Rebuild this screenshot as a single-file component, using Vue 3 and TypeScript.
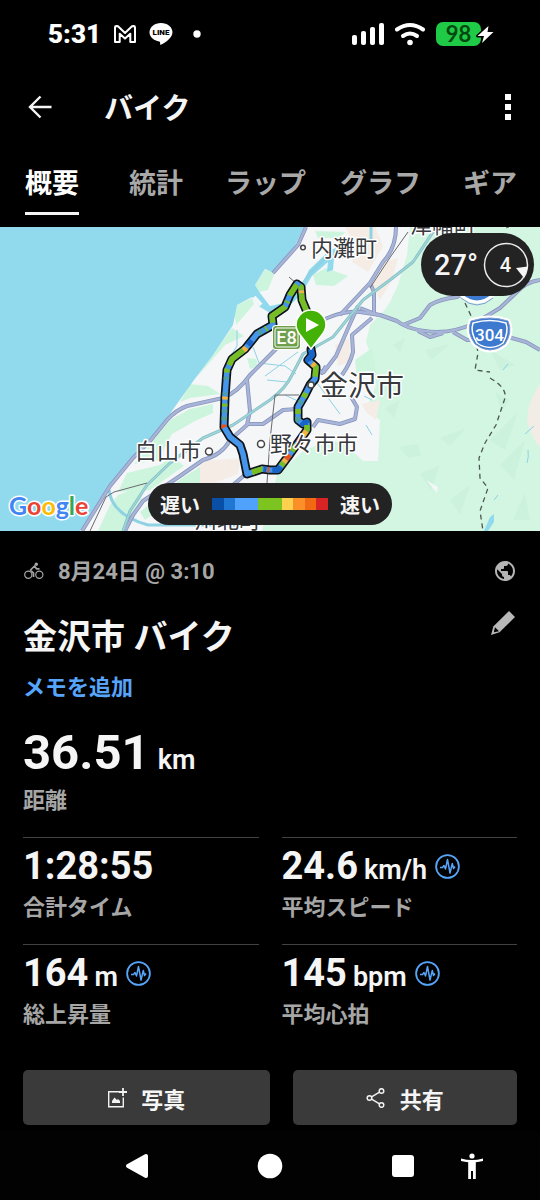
<script setup lang="ts">
import { ref } from 'vue'

interface Stat {
  value: string
  unit?: string
  label: string
  chart: boolean
}

interface RouteBand {
  color: string
  from: number
  to: number
}

const tabs = ['概要', '統計', 'ラップ', 'グラフ', 'ギア']
const activeTab = ref(0)

const stats: Stat[] = [
  { value: '1:28:55', label: '合計タイム', chart: false },
  { value: '24.6', unit: 'km/h', label: '平均スピード', chart: true },
  { value: '164', unit: 'm', label: '総上昇量', chart: true },
  { value: '145', unit: 'bpm', label: '平均心拍', chart: true },
]

const speedScale = [
  '#0a4fa6', '#2077d3', '#4fa1fb', '#4fa1fb', '#7cc41f',
  '#7cc41f', '#fdd04d', '#fb9029', '#ef6a12', '#d82424',
]

const roads = [
  'M306 227L298 245L273 273',
  'M82 531L110 486L133 458L150 441L167 420Q176 410 187 406L223 398Q238 392 250 375L275 350L297 330L330 317Q345 311 360 312L380 315L397 321Q410 331 437 332Q457 332 477 322L500 308L517 292Q526 282 540 280',
  'M396 227Q396 248 383 262L370 283L340 315',
  'M370 283L374 292V314',
  'M360 308L378 315',
  'M372 318L352 335L353 352Q350 364 342 375',
  'M358 306L349 326L336 356L323 373',
  'M403 325L420 318L430 305Q440 299 457 297L480 285',
  'M418 331L430 337L443 333',
  'M453 332L467 340L490 340',
  'M508 337L526 342L540 350',
  'M247 380L250 411L247 425L230 440Q222 455 203 460L180 476L143 501L133 515L125 531',
  'M247 424L263 424L283 410L297 409',
  'M313 427L318 420L340 424L355 419L357 407L350 395',
  'M247 473L233 485',
  'M316 367L322 373L326 366',
]

const trail =
  'M311 349L312 355L308 360L316 367L315 379L310 385L305 395L298 407V420L303 424L307 422V430L290 454L278 470H270L262 469L247 474L243 454L240 445L230 437L224 427L225 397L227 370L232 359L245 349L257 334L273 325L272 316L285 307L290 295L297 284L301 287L302 300L307 312'

const dark = '#1763c6'
const green = '#78bd22'
const teal = '#4f9f9a'
const amber = '#f2b43c'
const red = '#e6501d'

const bands: RouteBand[] = [
  { color: dark, from: 0, to: 14 },
  { color: amber, from: 18, to: 22 },
  { color: green, from: 22, to: 33 },
  { color: green, from: 52, to: 57 },
  { color: teal, from: 61, to: 64 },
  { color: green, from: 70, to: 75 },
  { color: teal, from: 78, to: 82 },
  { color: dark, from: 85, to: 93 },
  { color: green, from: 95, to: 101 },
  { color: amber, from: 101, to: 107 },
  { color: red, from: 109, to: 115 },
  { color: green, from: 118, to: 126 },
  { color: red, from: 130, to: 136 },
  { color: amber, from: 136, to: 140 },
  { color: green, from: 140, to: 144 },
  { color: dark, from: 145, to: 155 },
  { color: red, from: 158, to: 160 },
  { color: dark, from: 161, to: 164 },
  { color: green, from: 165, to: 176 },
  { color: red, from: 235, to: 238 },
  { color: teal, from: 242, to: 246 },
  { color: teal, from: 250, to: 253 },
  { color: green, from: 256, to: 259 },
  { color: amber, from: 263, to: 266 },
  { color: teal, from: 268, to: 270 },
  { color: teal, from: 283, to: 286 },
  { color: green, from: 290, to: 294 },
  { color: green, from: 298, to: 319 },
  { color: amber, from: 319, to: 323 },
  { color: dark, from: 326, to: 332 },
  { color: teal, from: 342, to: 346 },
  { color: green, from: 350, to: 352 },
  { color: green, from: 361, to: 384 },
  { color: green, from: 388, to: 390 },
  { color: green, from: 396, to: 409 },
  { color: green, from: 413, to: 418 },
  { color: amber, from: 418, to: 421 },
  { color: green, from: 421, to: 440 },
]
</script>

<template>
  <div class="screen">
    <div class="status">
      <div class="status-side">
        <span class="clock">5:31</span>
        <svg class="gmail" width="24" height="20" viewBox="0 0 24 20">
          <path d="M2 18V3.4Q2 2 3.4 2L5 2.3L12 9L19 2.3L20.6 2Q22 2 22 3.4V18H17.3V9.7L12 14.6L6.700 9.7V18Z" fill="none" stroke="#fff" stroke-width="2" stroke-linejoin="round" />
        </svg>
        <svg class="line-app" width="24" height="24" viewBox="0 0 24 24">
          <path d="M12 1C5.600 1 .5 5.200 .5 10.300C.5 15 4.700 18.700 10.300 19.400C11.800 19.800 10.800 22 11.200 22.800C12 23.400 23.500 17.200 23.500 10.300C23.500 5.200 18.400 1 12 1Z" fill="#fff" />
          <text x="12" y="13" text-anchor="middle" class="line-text">LINE</text>
        </svg>
        <svg class="more-dot" width="8" height="8" viewBox="0 0 8 8"><circle cx="4" cy="4" r="3.700" fill="#fff" /></svg>
      </div>
      <div class="status-side">
        <svg width="32" height="24" viewBox="0 0 32 24" fill="#fff">
          <rect x="0" y="13" width="5" height="10" rx="2" />
          <rect x="9" y="9" width="5" height="14" rx="2" />
          <rect x="18" y="5" width="5" height="18" rx="2" />
          <rect x="27" y="1" width="5" height="22" rx="2" />
        </svg>
        <svg class="wifi" width="32" height="24" viewBox="0 0 32 24" fill="none" stroke="#fff" stroke-linecap="round">
          <path d="M3 7.500Q16-1.500 29 7.500" stroke-width="4" />
          <path d="M9 14Q16 9 23 14" stroke-width="4" />
          <circle cx="16" cy="20.500" r="2.800" fill="#fff" stroke="none" />
        </svg>
        <svg class="battery" width="60" height="26" viewBox="0 0 60 26">
          <rect x="0" y="1" width="45" height="24" rx="7" fill="#1fcb46" />
          <text x="22.500" y="20.500" text-anchor="middle" class="battery-text">98</text>
          <path d="M52.500 5L41.500 15H48L46 22L57.500 11H51.500Z" fill="#fff" stroke="#000" stroke-width="3" paint-order="stroke" stroke-linejoin="round" />
        </svg>
      </div>
    </div>

    <header class="app-bar">
      <button class="icon-btn" type="button" aria-label="戻る">
        <svg width="24" height="24" viewBox="0 0 24 24" fill="none" stroke="#f5f5f5" stroke-width="2.400"><path d="M23.500 12H2M12.500 1.500L2 12L12.500 22.500" /></svg>
      </button>
      <h1>バイク</h1>
      <button class="icon-btn" type="button" aria-label="その他">
        <svg width="6" height="26" viewBox="0 0 6 26" fill="#fff"><path d="M0 0H6V6H0ZM0 10H6V16H0ZM0 20H6V26H0Z" /></svg>
      </button>
    </header>

    <nav class="tabs">
      <button
        v-for="(tab, i) in tabs"
        :key="tab"
        type="button"
        class="tab"
        :class="{ active: i === activeTab }"
        @click="activeTab = i"
      >
        <span>{{ tab }}</span>
      </button>
    </nav>

    <section class="map">
      <svg class="map-canvas" viewBox="0 227 540 304">
        <rect x="0" y="227" width="540" height="304" fill="#f5f6f8" />
        <path d="M410 227H540V531H262L277 475L303 451L330 440L345 444L363 461H378L380 420L366 410L376 385L372 358L366 342L370 325L383 312L390 302L398 285L407 255Z" fill="#d2f6e2" />
        <path d="M540 384Q528 400 527 420Q532 440 540 447Z" fill="#f2ece6" />
        <g fill="#f4ece5">
          <path d="M345 227H375L383 246L368 272L352 262L356 246Z" />
          <path d="M385 262L398 258L392 280L380 300L372 284Z" />
          <path d="M362 404L380 400L376 420L366 412Z" />
          <path d="M205 461L240 458L238 474L200 488L190 476Z" />
          <path d="M335 345L349 338L350 362L338 366Z" />
          <path d="M150 505L190 480L240 484V510L170 520Z" />
        </g>
        <g fill="#cdf5dd">
          <path d="M255 285L265 270L275 272L268 290L259 292Z" />
          <path d="M234 312L237 305L252 298L254 304L243 317L236 325Z" />
          <path d="M232 328L244 336L225 345L196 378Z" />
          <path d="M247 358L256 359L258 366L250 369Z" />
          <path d="M170 420L190 409L213 404V413L195 421L172 434L158 460L134 464Z" />
          <path d="M190 384L208 386L220 394L190 398L180 402Z" />
          <path d="M127 473L160 465L172 456L184 466L150 490L118 492Z" />
          <path d="M118 495L145 485L138 510L126 531H98L110 505Z" />
          <path d="M313 275L326 268L348 276L334 286L316 285Z" />
          <path d="M315 231L345 232L340 238H318Z" />
          <path d="M355 360L372 348L376 372L357 378Z" />
          <path d="M182 478L200 467L200 482L145 520L140 512Z" />
        </g>
        <path d="M0 227H304L294 248L272 272L265 269L255 285L260 293L270 306L284 303L300 288L309 270L330 250L345 245L334 258L333 270L327 272L328 262L312 276L300 296L282 312L270 313L260 307L252 297L237 305L233 325L213 355L194 380L167 418L150 439L133 456L110 484L80 531H0Z" fill="#91daee" />
        <path d="M254 297L261 305" stroke="#f5f6f8" stroke-width="4" />
        <g fill="#bfe8d3" opacity="0.300">
          <path d="M393 345L405 338L400 352Z" /><path d="M425 350L450 344L431 360Z" /><path d="M490 350L515 365L500 370Z" />
          <path d="M495 392L509 400L502 412Z" /><path d="M490 440L518 412L505 450Z" /><path d="M399 447L418 444L421 456L408 458Z" />
          <path d="M440 438L466 428L450 446Z" /><path d="M500 465L525 440L514 480Z" /><path d="M420 474L440 465L431 490Z" />
          <path d="M385 408L400 400L394 418Z" /><path d="M450 500L470 485L460 515Z" /><path d="M513 520L525 493L530 520Z" />
        </g>
        <path d="M426 480L438 487L437 493Z" fill="#f5f6f8" />
        <path d="M484 531L490 517L494 514V522L488 531Z" fill="#91daee" />
        <g fill="none" stroke="#8ed2e4">
          <path d="M109 490Q112 515 148 525H240" stroke-width="3" />
          <path d="M237 330V346L228 360M253 347L259 363L285 366L296 374M267 380L287 382M285 395L300 402M315 380L340 414M265 376L298 352M366 425L372 435M372 400L364 396M525 434L534 426M527 463Q529 457 528 450M494 500L498 495M503 370L508 364" stroke-width="1" />
          <path d="M297 292L309 275L331 251M371 227V241" stroke-width="3" />
        </g>
        <g fill="none" stroke-linejoin="round">
          <path v-for="d in roads" :key="'edge' + d" :d="d" stroke="#8795bb" stroke-width="4" />
          <path v-for="d in roads" :key="d" :d="d" stroke="#a8b5d8" stroke-width="2.400" />
          <path d="M123 531L130 511L147 485L170 463L203 438L233 425L270 400Q286 388 292 375L303 354L333 337L363 300L390 280L413 262L433 232L437 227" stroke="#83bfc6" stroke-width="3" />
          <path d="M123 531L130 511L147 485L170 463L203 438L233 425L270 400Q286 388 292 375L303 354L333 337L363 300L390 280L413 262L433 232L437 227" stroke="#a2d6d8" stroke-width="1.400" />
          <path d="M408 232L391 256L370 288M90 531L106 497L114 492L147 483M275 395H299M275 395L270 440L267 483M289 277L297 284M506 228L509 227" stroke="#6a6a6e" stroke-width="1" />
          <path d="M465 303L473 320L478 353L475 370L490 372M490 378Q507 388 505 398L496 425L485 443L479 458L480 478L488 488L480 511L483 531" stroke="#4c5652" stroke-width="1.300" stroke-dasharray="5 4" />
        </g>
        <g fill="none" stroke-linejoin="round">
          <path :d="trail" stroke="#101418" stroke-width="9" stroke-linecap="round" />
          <path :d="trail" stroke="#4595ea" stroke-width="5.500" />
          <path
            v-for="band in bands"
            :key="band.from"
            :d="trail"
            :stroke="band.color"
            :stroke-dasharray="`0 ${band.from} ${band.to - band.from} 1000`"
            stroke-width="5.500"
          />
        </g>

        <rect x="272" y="325" width="29" height="25" rx="4" fill="#fff" />
        <rect x="273" y="326" width="27" height="23" rx="3" fill="#6f9f4d" />
        <rect x="275" y="328" width="23" height="19" rx="2" fill="none" stroke="#fff" />
        <text x="286.500" y="344" text-anchor="middle" class="badge-text">E8</text>

        <path d="M471 321Q490 315 508 321Q513 332 505 344Q490 356 475 344Q466 332 471 321Z" fill="#3d79cf" stroke="#fff" stroke-width="5" paint-order="stroke" />
        <path d="M471 321Q490 315 508 321Q513 332 505 344Q490 356 475 344Q466 332 471 321Z" fill="none" stroke="#7f9dd0" stroke-width="1" />
        <path d="M473 323Q490 318 506 323Q509 332 503 343Q490 352 477 343Q470 332 473 323Z" fill="#3d79cf" stroke="#fff" stroke-width="1.500" />
        <text x="489.500" y="341" text-anchor="middle" class="badge-text shield-text">304</text>
        <path d="M462 296Q477 308 492 296L488 280H466Z" fill="#3d79cf" stroke="#fff" stroke-width="3" />
        <path d="M461 298Q477 312 493 298" fill="none" stroke="#7f9dd0" stroke-width="1" />

        <g fill="#fff" stroke="#444" stroke-width="1.500">
          <circle cx="303" cy="247.500" r="2.300" />
          <circle cx="209" cy="451.500" r="3.500" />
          <circle cx="261" cy="444" r="3.500" />
          <circle cx="311" cy="385" r="3" />
        </g>
        <g class="place">
          <text x="311" y="256">内灘町</text>
          <text x="410" y="233">津幡町</text>
          <text x="135" y="459">白山市</text>
          <text x="270" y="452">野々市市</text>
          <text x="195" y="528">川北町</text>
          <text x="320" y="396" class="city">金沢市</text>
        </g>

        <path d="M311 349L301 336Q296 330 296 325A15 15 0 0 1 326 325Q326 330 321 336Z" fill="#43b105" stroke="#fff" stroke-width="1.500" />
        <path d="M306 318L319 325L306 332Z" fill="#fff" />
        <text x="9" y="515" class="google"><tspan fill="#4285f4">G</tspan><tspan fill="#ea4335">o</tspan><tspan fill="#fbbc05">o</tspan><tspan fill="#4285f4">g</tspan><tspan fill="#34a853">l</tspan><tspan fill="#ea4335">e</tspan></text>
      </svg>

      <div class="weather">
        <span>27°</span>
        <svg width="46" height="46" viewBox="0 0 46 46">
          <circle cx="23" cy="23" r="21.500" fill="none" stroke="#ececec" stroke-width="1.500" />
          <text x="22.500" y="30" text-anchor="middle" class="wind-text">4</text>
          <path d="M33 26L45 24.500L41 36Z" fill="#f5f5f5" />
        </svg>
      </div>

      <div class="legend">
        <span>遅い</span>
        <div class="scale">
          <i v-for="(color, i) in speedScale" :key="i" :style="{ background: color }"></i>
        </div>
        <span>速い</span>
      </div>
    </section>

    <main class="details">
      <div class="meta">
        <svg width="20" height="18" viewBox="0 0 20 18" fill="none" stroke="#a6a6a6" stroke-width="1.200" stroke-linejoin="round">
          <circle cx="4.300" cy="12.700" r="3.600" /><circle cx="15.300" cy="12.700" r="3.600" />
          <path d="M9.500 15V11L6.500 8L10.500 4L12.500 6.800H15.500" stroke-width="1.700" />
          <circle cx="12.300" cy="2.200" r="1.700" fill="#a6a6a6" stroke="none" />
        </svg>
        <span class="date">8月24日 @ 3:10</span>
        <svg width="20" height="20" viewBox="2 2 20 20" fill="#b4b4b4">
          <path d="M12 2C6.480 2 2 6.480 2 12s4.480 10 10 10 10-4.480 10-10S17.520 2 12 2zm-1 17.930c-3.950-.49-7-3.850-7-7.930 0-.62.080-1.210.210-1.790L9 15v1c0 1.100.9 2 2 2v1.930zm6.900-2.540c-.26-.81-1-1.390-1.900-1.390h-1v-3c0-.55-.45-1-1-1H8v-2h2c.55 0 1-.45 1-1V7h2c1.100 0 2-.9 2-2v-.41c2.930 1.190 5 4.060 5 7.410 0 2.080-.8 3.970-2.100 5.390z" />
        </svg>
      </div>

      <div class="title-row">
        <h2>金沢市 バイク</h2>
        <button class="edit" type="button" aria-label="編集">
          <svg width="24" height="24" viewBox="0 0 24 24">
            <path d="M18 0L24 6L8.500 21.300L0 24L2.500 15.200Z" fill="#b8b8b8" />
            <path d="M4 16.300L8 20.200L2.800 21.300Z" fill="#000" />
          </svg>
        </button>
      </div>
      <a class="memo" href="#">メモを追加</a>

      <div class="distance">
        <p class="figure"><strong>36.51</strong><span>km</span></p>
        <p class="label">距離</p>
      </div>

      <div class="stats">
        <div v-for="stat in stats" :key="stat.label" class="stat">
          <div class="stat-value">
            <p class="figure"><strong>{{ stat.value }}</strong><span v-if="stat.unit">{{ stat.unit }}</span></p>
            <button v-if="stat.chart" class="chart" type="button" aria-label="グラフを表示">
              <svg width="25" height="25" viewBox="0 0 25 25" fill="none" stroke="#56a5fb">
                <circle cx="12.500" cy="12.500" r="11.400" stroke-width="1.800" />
                <path d="M5 13.500H7.500L9 11.500L10.500 15L12.500 5.500L15 19L17.300 9.500L18.500 14.500L20 12.500" stroke-width="1.500" stroke-linejoin="round" />
              </svg>
            </button>
          </div>
          <p class="label">{{ stat.label }}</p>
        </div>
      </div>

      <div class="actions">
        <button type="button">
          <svg width="20" height="20" viewBox="0 0 20 20" fill="none" stroke="#f2f2f2">
            <path d="M12 3.700H1.700V18.800H16.300V9.500" stroke-width="1.400" />
            <path d="M16 0V8M12 4H20" stroke-width="1.800" />
            <path d="M5 15V13L7.500 9.500L10 12L11 11L13 13V15Z" fill="#f2f2f2" stroke="none" />
          </svg>
          写真
        </button>
        <button type="button">
          <svg width="20" height="20" viewBox="0 0 20 20" fill="none" stroke="#f2f2f2" stroke-width="1.500">
            <circle cx="3.500" cy="10" r="2.300" /><circle cx="15.500" cy="3" r="2.300" /><circle cx="15.500" cy="17" r="2.300" />
            <path d="M5.600 8.900L13.500 4.200M5.600 11.100L13.500 15.800" />
          </svg>
          共有
        </button>
      </div>
    </main>

    <nav class="system-nav">
      <div class="nav-left">
        <button type="button" aria-label="前へ">
          <svg width="24" height="26" viewBox="0 0 24 26" fill="#fff"><path d="M3 13L21 3V23Z" stroke="#fff" stroke-width="4" stroke-linejoin="round" /></svg>
        </button>
      </div>
      <button type="button" aria-label="ホーム">
        <svg width="26" height="26" viewBox="0 0 26 26" fill="#fff"><circle cx="13" cy="13" r="12.300" /></svg>
      </button>
      <div class="nav-right">
        <button type="button" aria-label="最近のアプリ">
          <svg width="24" height="24" viewBox="0 0 24 24" fill="#fff"><rect x="1" y="1" width="22" height="22" rx="3" /></svg>
        </button>
        <button type="button" aria-label="ユーザー補助">
          <svg width="24" height="26" viewBox="0 0 24 26" fill="#fff">
            <circle cx="12" cy="3" r="2.600" />
            <path d="M1 5.500Q12 8.500 23 5.500L23 8Q19 9 15.800 9.300V26H13V18H11V26H8.200V9.300Q5 9 1 8Z" />
          </svg>
        </button>
      </div>
    </nav>
  </div>
</template>

<style>
body {
  margin: 0;
  background: #000;
}
</style>

<style scoped>
.screen {
  min-height: 100vh;
  display: flex;
  flex-direction: column;
  background: #000;
  color: #f5f5f5;
  font-family: Roboto, "Noto Sans CJK JP", sans-serif;
  overflow: hidden;
}
h1, h2, p {
  margin: 0;
}
button {
  border: 0;
  padding: 0;
  background: none;
  color: inherit;
  font: inherit;
  cursor: pointer;
}
svg {
  display: block;
  flex: none;
}

.status {
  height: 67px;
  padding: 0 44px 0 48px;
  display: flex;
  justify-content: space-between;
  align-items: center;
}
.status-side {
  display: flex;
  align-items: center;
}
.clock {
  font: 900 26px/32px Roboto, sans-serif;
  color: #fff;
}
.gmail {
  margin-left: 12px;
}
.line-app {
  margin-left: 12px;
}
.line-text {
  font: 900 8px Roboto, sans-serif;
  fill: #000;
}
.more-dot {
  margin-left: 20px;
}
.wifi {
  margin-left: 10px;
}
.battery {
  margin-left: 10px;
}
.battery-text {
  font: 700 22px Lato, sans-serif;
  fill: #05480f;
}

.app-bar {
  height: 80px;
  padding: 0 17px 0 16px;
  display: flex;
  align-items: center;
}
.app-bar h1 {
  flex: 1;
  margin-left: 40px;
  padding-top: 4px;
  font-size: 29px;
  line-height: 40px;
  font-weight: 700;
}
.icon-btn {
  height: 48px;
  min-width: 30px;
  display: flex;
  align-items: center;
  justify-content: center;
}
.app-bar .icon-btn:first-child {
  width: 48px;
}

.tabs {
  height: 80px;
  display: flex;
  align-items: flex-end;
  overflow-x: auto;
  scrollbar-width: none;
}
.tab {
  flex: none;
  min-width: 104px;
  height: 80px;
  padding: 17px 17px 11px;
  display: flex;
  justify-content: center;
  align-items: flex-start;
  box-sizing: border-box;
  color: #a8a8a8;
  font-size: 27px;
  line-height: 40px;
  font-weight: 700;
}
.tab span {
  padding-bottom: 8px;
  border-bottom: 3px solid transparent;
}
.tab.active {
  color: #fff;
}
.tab.active span {
  border-color: #f5f5f5;
}

.map {
  position: relative;
}
.map-canvas {
  width: 100%;
  height: auto;
}
.place {
  font-family: "Noto Sans CJK JP", sans-serif;
  font-size: 22px;
  fill: #38393d;
  stroke: #fff;
  stroke-width: 3px;
  stroke-linejoin: round;
  paint-order: stroke;
}
.city {
  font-size: 28px;
}
.badge-text {
  font: 500 18px Roboto, sans-serif;
  fill: #fff;
}
.shield-text {
  font-size: 17px;
}
.google {
  font: 700 25px Lato, sans-serif;
  stroke: #fff;
  stroke-width: 3px;
  paint-order: stroke;
  stroke-linejoin: round;
}
.weather {
  position: absolute;
  top: 6px;
  right: 6px;
  height: 63px;
  padding: 0 5px 0 13px;
  display: flex;
  align-items: center;
  gap: 5px;
  border-radius: 32px;
  background: #232323;
  font-size: 29px;
  font-weight: 500;
}
.wind-text {
  font: 500 20px Roboto, sans-serif;
  fill: #f5f5f5;
}
.legend {
  position: absolute;
  left: 50%;
  bottom: 6px;
  transform: translateX(-50%);
  height: 42px;
  padding: 0 12px;
  display: flex;
  align-items: center;
  gap: 12px;
  border-radius: 21px;
  background: #232323;
  font-size: 20px;
  font-weight: 700;
  white-space: nowrap;
}
.scale {
  width: 116px;
  height: 12px;
  display: flex;
}
.scale i {
  flex: 1;
}

.details {
  padding: 24px 23px 0;
}
.meta {
  height: 32px;
  padding: 0 2px 0 1px;
  display: flex;
  align-items: center;
}
.date {
  flex: 1;
  margin-left: 14px;
  padding-top: 2px;
  color: #a6a6a6;
  font-size: 22px;
  line-height: 32px;
  font-weight: 700;
}
.title-row {
  margin-top: 24px;
  display: flex;
  justify-content: space-between;
  align-items: flex-start;
}
.title-row h2 {
  padding-top: 2px;
  font-size: 34px;
  line-height: 48px;
  font-weight: 700;
}
.edit {
  margin-right: 2px;
}
.memo {
  display: table;
  margin-top: 11px;
  color: #56a5fb;
  font-size: 22px;
  line-height: 32px;
  font-weight: 700;
  text-decoration: none;
}
.distance {
  margin-top: 19px;
}
.figure {
  display: flex;
  align-items: baseline;
  gap: 6px;
  font-size: 27px;
  line-height: 28px;
  font-weight: 600;
  white-space: nowrap;
}
.figure strong {
  font-size: 38px;
  line-height: 48px;
  font-weight: 700;
}
.distance .figure {
  gap: 8px;
}
.distance strong {
  font-size: 49px;
  line-height: 60px;
}
.label {
  padding-top: 2px;
  color: #a6a6a6;
  font-size: 22px;
  line-height: 32px;
  font-weight: 700;
}
.stats {
  margin-top: 20px;
  display: grid;
  grid-template-columns: 1fr 1fr;
  gap: 20px 23px;
}
.stat {
  border-top: 1px solid #424242;
  padding-top: 4px;
}
.stat-value {
  height: 48px;
  display: flex;
  align-items: center;
  gap: 8px;
}
.actions {
  margin-top: 39px;
  display: grid;
  grid-template-columns: 11fr 10fr;
  gap: 23px;
}
.actions button {
  height: 55px;
  display: flex;
  align-items: center;
  justify-content: center;
  gap: 14px;
  border-radius: 5px;
  background: #3a3a3a;
  font-size: 22px;
  font-weight: 700;
}

.system-nav {
  flex: 1;
  margin-top: 6px;
  min-height: 69px;
  display: grid;
  grid-template-columns: 1fr 48px 1fr;
  align-items: center;
  background: #020202;
}
.system-nav button {
  width: 48px;
  height: 48px;
  display: flex;
  align-items: center;
  justify-content: center;
}
.nav-left {
  display: flex;
  justify-content: flex-end;
  padding-right: 85px;
}
.nav-right {
  display: flex;
  gap: 21px;
  padding-left: 85px;
}
</style>
